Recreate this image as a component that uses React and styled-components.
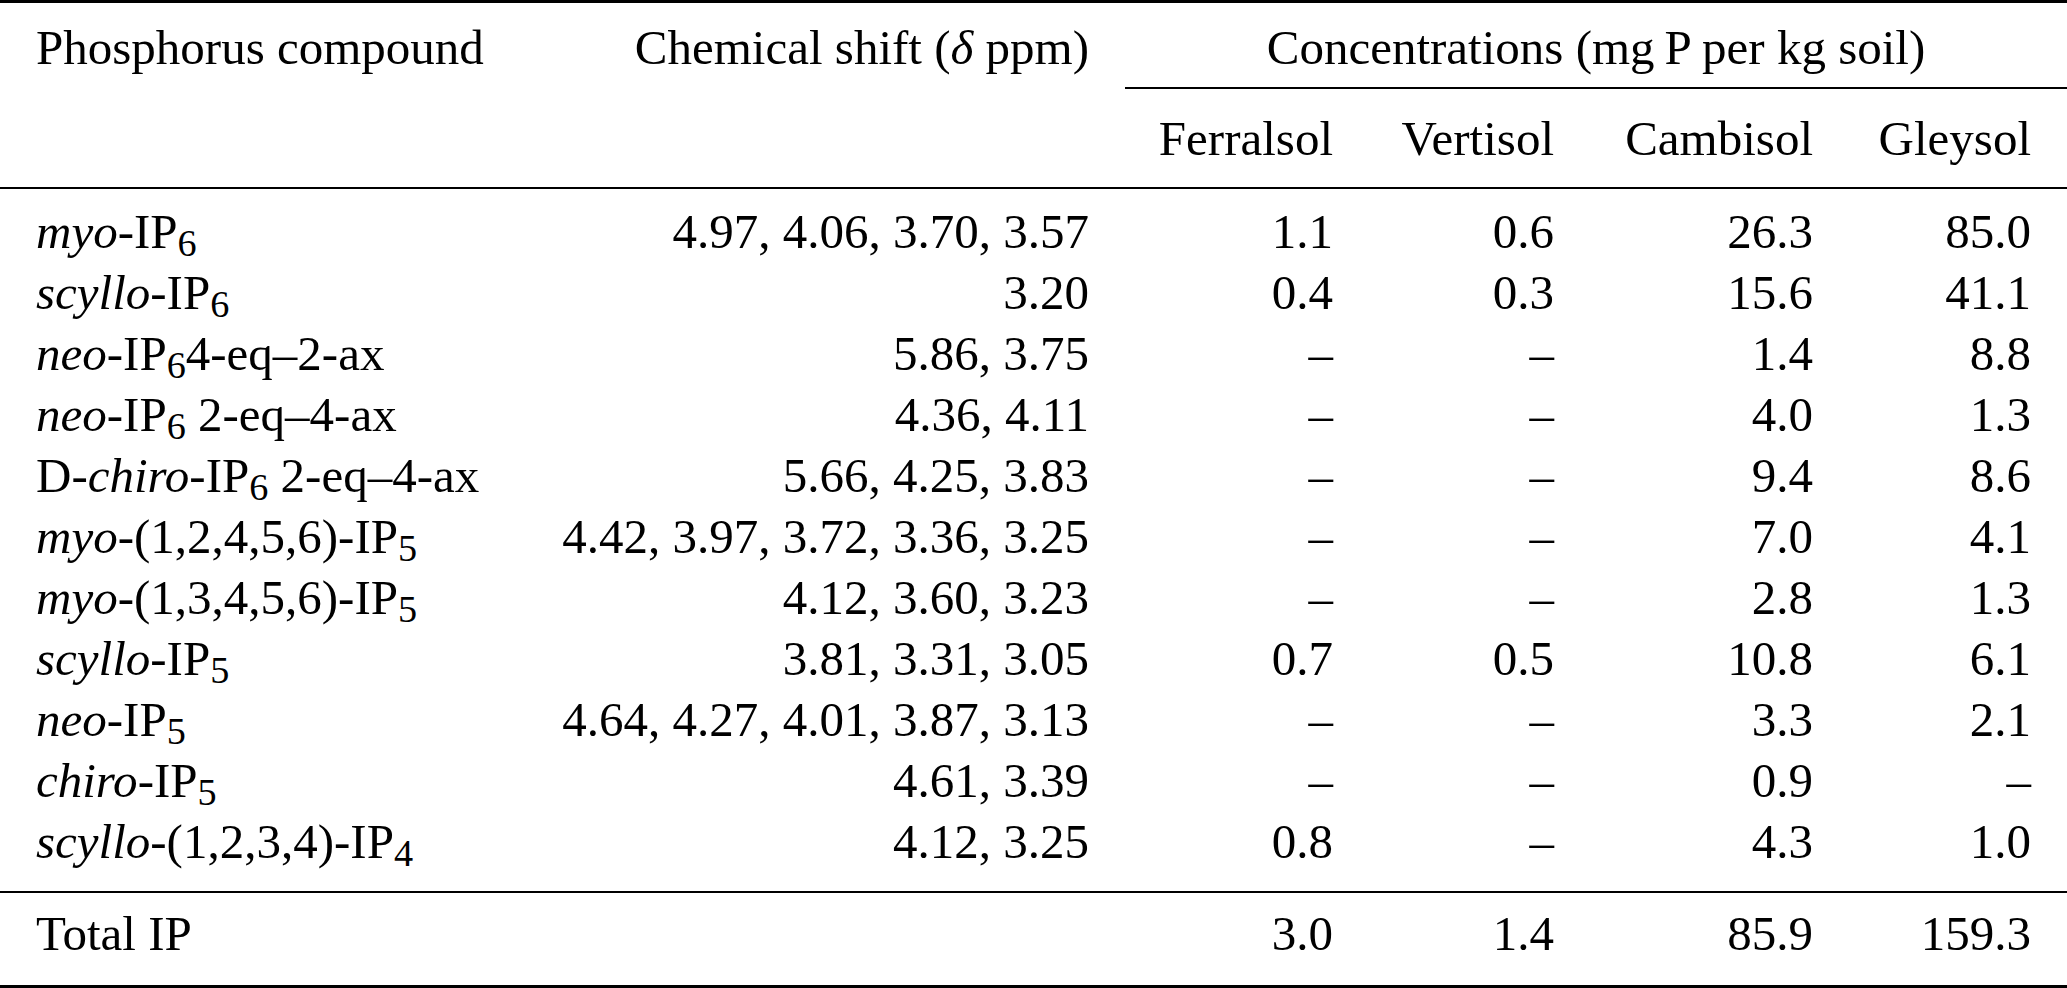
import React from "react";
import styled, { createGlobalStyle } from "styled-components";

const GlobalStyle = createGlobalStyle`
  html, body {
    margin: 0;
    padding: 0;
    background: #ffffff;
  }
`;

const Table = styled.table`
  width: 2067px;
  table-layout: fixed;
  border-collapse: separate;
  border-spacing: 0;
  font-family: "Liberation Serif", "Times New Roman", serif;
  font-size: 49px;
  line-height: 61px;
  color: #000000;
`;

const Col = styled.col`
  width: ${(p) => p.$w}px;
`;

// text columns start 36px in; number columns keep 36px on the right
const Head = styled.th`
  padding: ${(p) => (p.$align === "left" ? "0 36px" : "0 36px 0 20px")};
  font-weight: normal;
  text-align: ${(p) => p.$align || "right"};
  vertical-align: top;
  white-space: nowrap;
`;

const Cell = styled.td`
  padding: ${(p) => (p.$align === "left" ? "0 36px" : "0 36px 0 20px")};
  text-align: ${(p) => p.$align || "right"};
  vertical-align: top;
  white-space: nowrap;
`;

// first header line, sits under the heavy top rule
const TopRow = styled.tr`
  & > th {
    border-top: 3px solid #000;
    padding-top: 14px;
    padding-bottom: 9px;
  }
`;

const SpanHead = styled(Head)`
  && {
    padding-left: 36px;
    border-bottom: 2px solid #000;
  }
`;

// soil names, closed by the mid rule
const SubRow = styled.tr`
  & > th {
    padding-top: 19px;
    padding-bottom: 18px;
    border-bottom: 2px solid #000;
  }
`;

const Body = styled.tbody`
  & > tr:first-child > td {
    padding-top: 12px;
  }
  & > tr:last-child > td {
    padding-bottom: 19px;
    border-bottom: 2px solid #000;
  }
`;

const TotalRow = styled.tr`
  & > td {
    padding-top: 10px;
    padding-bottom: 21px;
    border-bottom: 3px solid #000;
  }
`;

const Iso = styled.i`
  font-style: italic;
`;

const Sub = styled.sub`
  font-size: 0.78em;
  line-height: 0;
  vertical-align: -0.22em;
  color: #000000;
`;

const Compound = ({ lead, iso, mid, sub, tail }) => (
  <>
    {lead}
    <Iso>{iso}</Iso>
    {mid}
    <Sub>{sub}</Sub>
    {tail}
  </>
);

const soils = ["Ferralsol", "Vertisol", "Cambisol", "Gleysol"];
const widths = [524, 601, 244, 221, 259, 218];

const rows = [
  { name: { iso: "myo", mid: "-IP", sub: "6" }, shift: "4.97, 4.06, 3.70, 3.57", vals: ["1.1", "0.6", "26.3", "85.0"] },
  { name: { iso: "scyllo", mid: "-IP", sub: "6" }, shift: "3.20", vals: ["0.4", "0.3", "15.6", "41.1"] },
  { name: { iso: "neo", mid: "-IP", sub: "6", tail: "4-eq\u20132-ax" }, shift: "5.86, 3.75", vals: ["\u2013", "\u2013", "1.4", "8.8"] },
  { name: { iso: "neo", mid: "-IP", sub: "6", tail: " 2-eq\u20134-ax" }, shift: "4.36, 4.11", vals: ["\u2013", "\u2013", "4.0", "1.3"] },
  { name: { lead: "D-", iso: "chiro", mid: "-IP", sub: "6", tail: " 2-eq\u20134-ax" }, shift: "5.66, 4.25, 3.83", vals: ["\u2013", "\u2013", "9.4", "8.6"] },
  { name: { iso: "myo", mid: "-(1,2,4,5,6)-IP", sub: "5" }, shift: "4.42, 3.97, 3.72, 3.36, 3.25", vals: ["\u2013", "\u2013", "7.0", "4.1"] },
  { name: { iso: "myo", mid: "-(1,3,4,5,6)-IP", sub: "5" }, shift: "4.12, 3.60, 3.23", vals: ["\u2013", "\u2013", "2.8", "1.3"] },
  { name: { iso: "scyllo", mid: "-IP", sub: "5" }, shift: "3.81, 3.31, 3.05", vals: ["0.7", "0.5", "10.8", "6.1"] },
  { name: { iso: "neo", mid: "-IP", sub: "5" }, shift: "4.64, 4.27, 4.01, 3.87, 3.13", vals: ["\u2013", "\u2013", "3.3", "2.1"] },
  { name: { iso: "chiro", mid: "-IP", sub: "5" }, shift: "4.61, 3.39", vals: ["\u2013", "\u2013", "0.9", "\u2013"] },
  { name: { iso: "scyllo", mid: "-(1,2,3,4)-IP", sub: "4" }, shift: "4.12, 3.25", vals: ["0.8", "\u2013", "4.3", "1.0"] },
];

const totals = ["3.0", "1.4", "85.9", "159.3"];

export default function App() {
  return (
    <>
      <GlobalStyle />
      <Table>
        <colgroup>
          {widths.map((w, i) => (
            <Col key={i} $w={w} />
          ))}
        </colgroup>
        <thead>
          <TopRow>
            <Head $align="left">Phosphorus compound</Head>
            <Head>
              Chemical shift (<Iso>δ</Iso> ppm)
            </Head>
            <SpanHead colSpan={4} $align="center">
              Concentrations (mg{"\u2009"}P per kg soil)
            </SpanHead>
          </TopRow>
          <SubRow>
            <Head />
            <Head />
            {soils.map((s) => (
              <Head key={s}>{s}</Head>
            ))}
          </SubRow>
        </thead>
        <Body>
          {rows.map((r, i) => (
            <tr key={i}>
              <Cell $align="left">
                <Compound {...r.name} />
              </Cell>
              <Cell>{r.shift}</Cell>
              {r.vals.map((v, j) => (
                <Cell key={j}>{v}</Cell>
              ))}
            </tr>
          ))}
        </Body>
        <tfoot>
          <TotalRow>
            <Cell $align="left">Total IP</Cell>
            <Cell />
            {totals.map((v, j) => (
              <Cell key={j}>{v}</Cell>
            ))}
          </TotalRow>
        </tfoot>
      </Table>
    </>
  );
}
